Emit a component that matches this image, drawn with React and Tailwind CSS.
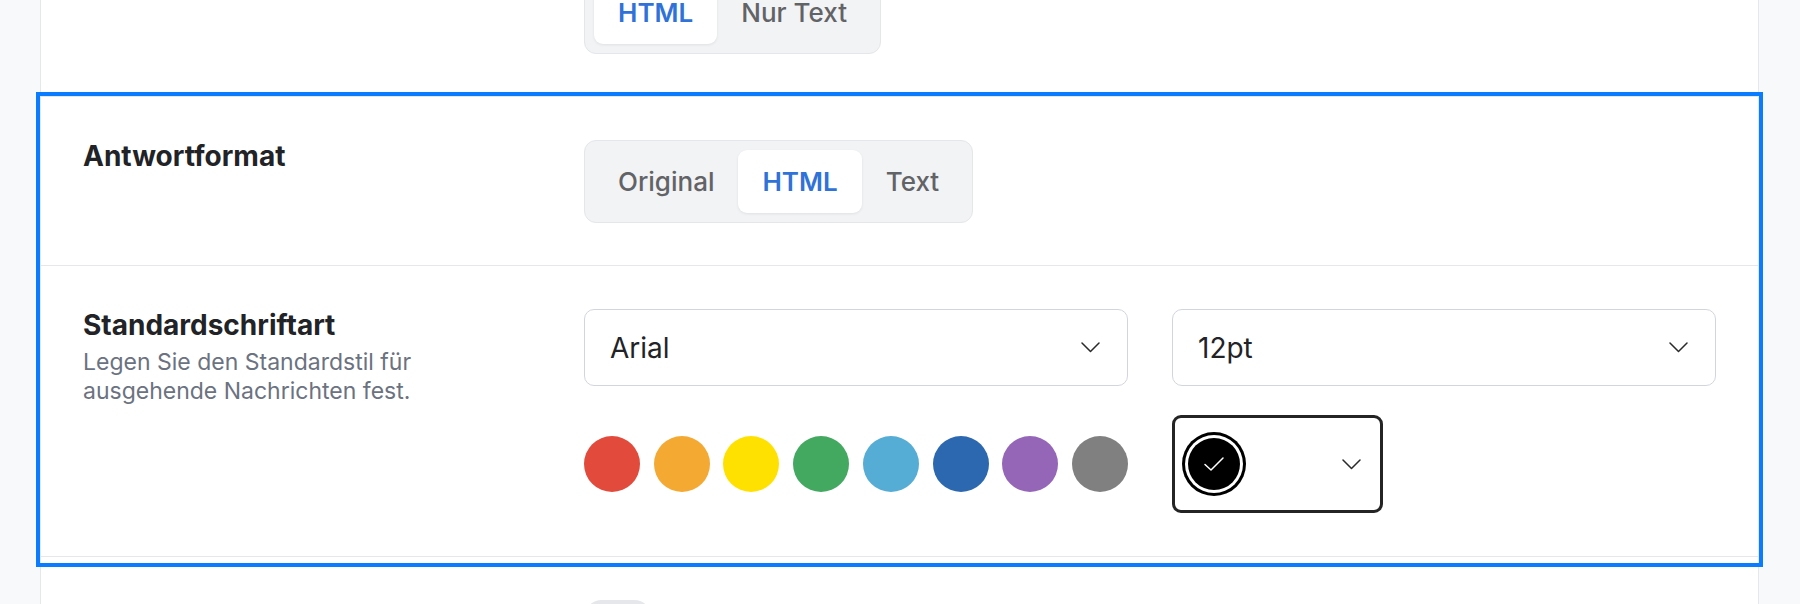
import React from "react";

const SWATCHES = [
  "#e24b3b",
  "#f4a933",
  "#ffe100",
  "#43a860",
  "#55acd4",
  "#2b68b0",
  "#9566b8",
  "#808080",
];

function Chevron({ className = "" }) {
  return (
    <svg width="19" height="11" viewBox="0 0 19 11" fill="none" className={className}>
      <polyline points="1,1 9.5,9.5 18,1" stroke="#2a2a2a" strokeWidth="1.5" strokeLinejoin="round" strokeLinecap="round" />
    </svg>
  );
}

function Segmented({ options, active }) {
  return (
    <div className="inline-flex w-fit rounded-[12px] border border-[#e4e6ea] bg-[#f2f3f5] p-[9px]">
      {options.map((opt) => {
        const on = opt === active;
        return (
          <button
            key={opt}
            className={
              on
                ? "h-[63px] rounded-[9px] bg-white px-6 text-[26px] font-semibold text-[#2f72d8] shadow-[0_1px_3px_rgba(0,0,0,0.08)]"
                : "h-[63px] rounded-[9px] px-6 text-[26px] font-medium text-[#626366]"
            }
          >
            {opt}
          </button>
        );
      })}
    </div>
  );
}

function Select({ value }) {
  return (
    <div className="flex h-[77px] items-center justify-between rounded-[10px] border-[1.5px] border-[#d2d6dc] bg-white pl-[25px] pr-[27px]">
      <span className="text-[28px] text-[#222326]">{value}</span>
      <Chevron />
    </div>
  );
}

function ColorPicker() {
  return (
    <div className="flex h-[98px] w-[211px] items-center justify-between rounded-[9px] border-[3px] border-[#242424] bg-white pl-[7px] pr-[19px]">
      <div className="h-[64px] w-[64px] rounded-full bg-black p-[3px]">
        <div className="h-full w-full rounded-full bg-white p-[3px]">
          <div className="flex h-full w-full items-center justify-center rounded-full bg-black">
            <svg width="22" height="16" viewBox="0 0 22 16" fill="none">
              <polyline points="2,8.5 8,14 20,2" stroke="#fff" strokeWidth="1.5" strokeLinecap="round" strokeLinejoin="round" />
            </svg>
          </div>
        </div>
      </div>
      <Chevron />
    </div>
  );
}

export default function App() {
  return (
    <div className="h-[604px] overflow-hidden bg-[#f8f9fb] font-['Inter',sans-serif]">
      <div className="ml-[40px] -mt-[72px] w-[1719px] border-x border-[#e5e7eb] bg-white">
        {/* Verfassen-Format */}
        <div className="grid grid-cols-[501px_1fr] border-b border-[#e5e7eb] px-[42px] pt-[43px] pb-[42px]">
          <div />
          <Segmented options={["HTML", "Nur Text"]} active="HTML" />
        </div>

        {/* hervorgehobener Bereich */}
        <div className="pb-[5px] outline-4 outline-offset-1 outline-[#0a7cff]">
          <div className="grid grid-cols-[501px_1fr] border-b border-[#e5e7eb] px-[42px] pt-[43px] pb-[42px]">
            <div className="text-[28px] leading-8 font-bold text-[#222326]">Antwortformat</div>
            <Segmented options={["Original", "HTML", "Text"]} active="HTML" />
          </div>

          <div className="grid grid-cols-[501px_1fr] border-b border-[#e5e7eb] px-[42px] pt-[43px] pb-[43px]">
            <div>
              <div className="text-[28px] leading-8 font-bold text-[#222326]">Standardschriftart</div>
              <p className="mt-[7px] max-w-[390px] text-[23px] leading-[29px] text-[#6b7280]">
                Legen Sie den Standardstil für ausgehende Nachrichten fest.
              </p>
            </div>
            <div className="grid grid-cols-2 gap-x-[44px] gap-y-[29px]">
              <Select value="Arial" />
              <Select value="12pt" />
              <div className="flex items-center justify-between">
                {SWATCHES.map((c) => (
                  <div key={c} className="h-[56px] w-[56px] rounded-full" style={{ backgroundColor: c }} />
                ))}
              </div>
              <ColorPicker />
            </div>
          </div>
        </div>

        <div className="grid grid-cols-[501px_1fr] px-[42px] pt-[38px]">
          <div />
          <div className="h-[36px] w-[68px] rounded-full bg-[#e5e7eb]" />
        </div>
      </div>
    </div>
  );
}
